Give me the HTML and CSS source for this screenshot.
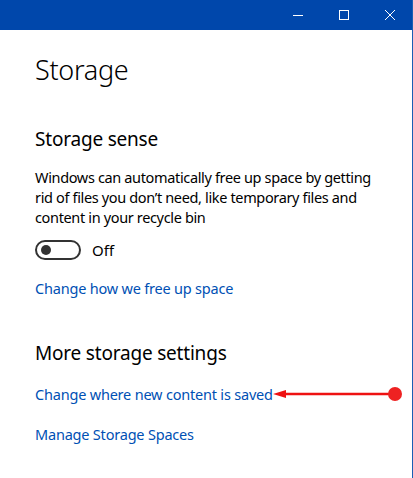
FILE: index.html
```html
<!DOCTYPE html>
<html>
<head>
<meta charset="utf-8">
<link rel="stylesheet" href="styles.css">
</head>
<body>
<div class="window">
  <div class="titlebar">
    <div class="tb-btn"><svg width="12" height="12" viewBox="0 0 12 12"><line x1="1" y1="6.5" x2="11" y2="6.5" stroke="#fff" stroke-width="1"/></svg></div>
    <div class="tb-btn"><svg width="12" height="12" viewBox="0 0 12 12"><rect x="1.5" y="1.5" width="9" height="9" fill="none" stroke="#fff" stroke-width="1"/></svg></div>
    <div class="tb-btn"><svg width="12" height="12" viewBox="0 0 12 12"><path d="M1 1 L11 11 M11 1 L1 11" stroke="#fff" stroke-width="1"/></svg></div>
  </div>
  <div class="content">
    <h1 class="title">Storage</h1>
    <h2 class="section">Storage sense</h2>
    <p class="desc">Windows can automatically free up space by getting<br>rid of files you don’t need, like temporary files and<br>content in your recycle bin</p>
    <div class="toggle-row">
      <span class="toggle"><span class="knob"></span></span>
      <span class="toggle-label">Off</span>
    </div>
    <a class="link link-first">Change how we free up space</a>
    <h2 class="section section-2">More storage settings</h2>
    <div class="link-row">
      <a class="link">Change where new content is saved</a>
      <svg class="arrow" width="130" height="16" viewBox="0 0 130 16">
        <line x1="8" y1="8" x2="122" y2="8" stroke="#ee1111" stroke-width="2.5"/>
        <polygon points="0,8 13,4 13,12" fill="#ee1111"/>
        <circle cx="122" cy="8" r="7" fill="#ee2222"/>
      </svg>
    </div>
    <a class="link link-last">Manage Storage Spaces</a>
  </div>
</div>
</body>
</html>
```
FILE: styles.css
```css
html, body {
  margin: 0;
  padding: 0;
  background: #fff;
}
body {
  font-family: "Noto Sans", "Open Sans", "Liberation Sans", sans-serif;
  color: #000;
}
.window {
  width: 413px;
  height: 478px;
  box-sizing: border-box;
  border-right: 1px solid #1a5fb4;
  overflow: hidden;
}
.titlebar {
  height: 30px;
  background: #0047ab;
  display: flex;
  justify-content: flex-end;
  margin-right: -1px;
}
.tb-btn {
  width: 46px;
  height: 30px;
  display: flex;
  align-items: center;
  justify-content: center;
}
.content {
  padding: 0 0 0 35px;
}
.title {
  font-weight: 300;
  font-size: 27px;
  margin: 22px 0 0 0;
  line-height: 36px;
  letter-spacing: -0.3px;
}
.section {
  font-weight: 400;
  font-size: 19px;
  margin: 38px 0 0 0;
  line-height: 26px;
  letter-spacing: -0.2px;
}
.section-2 {
  margin-top: 42px;
}
.desc {
  font-size: 14.5px;
  line-height: 20px;
  margin: 15px 0 0 0;
  width: 376px;
  white-space: nowrap;
  letter-spacing: -0.35px;
}
.toggle-row {
  display: flex;
  align-items: center;
  margin-top: 13px;
  height: 20px;
}
.toggle {
  width: 38px;
  height: 16px;
  border: 2px solid #333;
  border-radius: 10px;
  display: flex;
  align-items: center;
  padding-left: 4px;
  box-sizing: content-box;
}
.knob {
  width: 10px;
  height: 10px;
  border-radius: 50%;
  background: #333;
}
.toggle-label {
  font-size: 15px;
  margin-left: 11px;
}
.link {
  display: block;
  color: #0050b4;
  font-size: 14.5px;
  line-height: 20px;
  letter-spacing: -0.2px;
  text-decoration: none;
}
.link-first {
  margin-top: 18px;
}
.link-row {
  display: flex;
  align-items: center;
  margin-top: 18px;
}
.arrow {
  flex: none;
}
.link-last {
  margin-top: 20px;
}
```
